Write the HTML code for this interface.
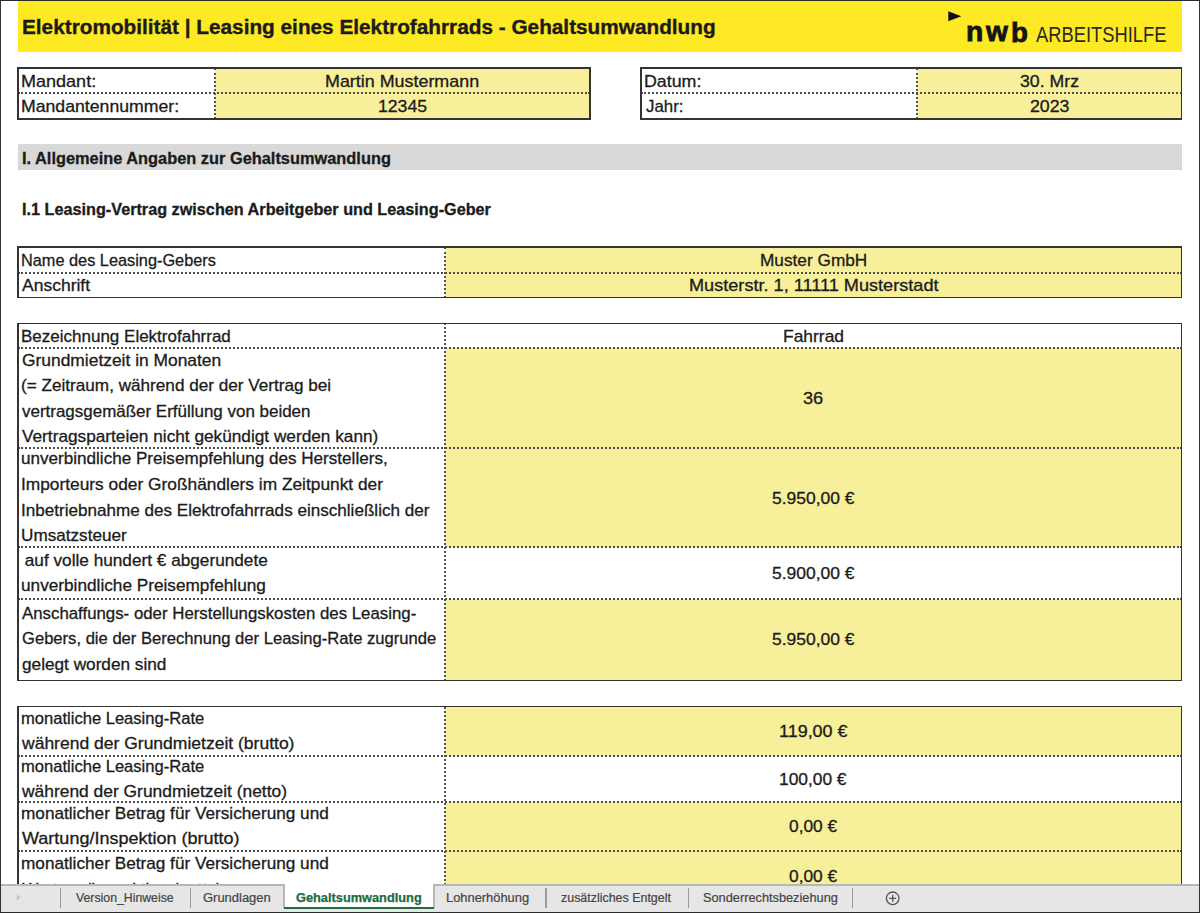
<!DOCTYPE html>
<html><head><meta charset="utf-8"><style>
html,body{margin:0;padding:0;}
body{width:1200px;height:913px;position:relative;overflow:hidden;background:#fff;font-family:"Liberation Sans",sans-serif;}
body>div,body>svg{position:absolute;}
</style></head><body>
<div style="left:0px;top:0px;width:1200px;height:913px;background:#ffffff;"></div>
<div style="left:18px;top:1px;width:1164px;height:51px;background:#fde924;"></div>
<div style="left:21.65px;top:17.37px;font-size:20px;line-height:20px;white-space:pre;color:#1b1b1b;font-weight:bold;transform:scaleX(1.0385);transform-origin:0 0;-webkit-text-stroke:0.35px #1b1b1b;">Elektromobilität | Leasing eines Elektrofahrrads - Gehaltsumwandlung</div>
<svg style="left:947px;top:10px" width="16" height="13"><polygon points="1.3,1.3 1.3,11.3 14.3,6.3" fill="#111"/></svg>
<div style="left:966.46px;top:19.24px;font-size:27px;line-height:27px;white-space:pre;color:#141414;font-weight:bold;transform:scaleX(1.0462);transform-origin:0 0;-webkit-text-stroke:0.8px #141414;">n</div>
<div style="left:986.04px;top:19.24px;font-size:27px;line-height:27px;white-space:pre;color:#141414;font-weight:bold;transform:scaleX(1.0427);transform-origin:0 0;-webkit-text-stroke:0.8px #141414;">w</div>
<div style="left:1010.90px;top:18.82px;font-size:27.5px;line-height:27.5px;white-space:pre;color:#141414;font-weight:bold;transform:scaleX(1.0081);transform-origin:0 0;-webkit-text-stroke:0.8px #141414;">b</div>
<div style="left:1036.00px;top:24.15px;font-size:21.2px;line-height:21.2px;white-space:pre;color:#2b2a1c;transform:scaleX(0.8653);transform-origin:0 0;">ARBEITSHILFE</div>
<div style="left:215px;top:68px;width:375px;height:51px;background:#f8ef9a;"></div>
<div style="left:18px;top:92.4px;width:572px;height:0;border-top:2.2px dotted #4d4d4d;"></div>
<div style="left:213.95px;top:68px;width:0;height:51px;border-left:2.1px dotted #555;"></div>
<div style="left:18px;top:67.35px;width:572px;height:1.5px;background:#333;"></div>
<div style="left:18px;top:118.25px;width:572px;height:1.5px;background:#333;"></div>
<div style="left:17.25px;top:67.35px;width:1.5px;height:52.400000000000006px;background:#333;"></div>
<div style="left:589.25px;top:67.35px;width:1.5px;height:52.400000000000006px;background:#333;"></div>
<div style="left:21.26px;top:73.01px;font-size:17px;line-height:17px;white-space:pre;color:#1b1b1b;transform:scaleX(1.0601);transform-origin:0 0;-webkit-text-stroke:0.3px #1b1b1b;">Mandant:</div>
<div style="left:21.29px;top:98.21px;font-size:17px;line-height:17px;white-space:pre;color:#1b1b1b;transform:scaleX(1.0390);transform-origin:0 0;-webkit-text-stroke:0.3px #1b1b1b;">Mandantennummer:</div>
<div style="left:325.32px;top:73.01px;font-size:17px;line-height:17px;white-space:pre;color:#1b1b1b;transform:scaleX(1.0522);transform-origin:0 0;-webkit-text-stroke:0.3px #1b1b1b;">Martin Mustermann</div>
<div style="left:377.68px;top:98.21px;font-size:17px;line-height:17px;white-space:pre;color:#1b1b1b;transform:scaleX(1.0374);transform-origin:0 0;-webkit-text-stroke:0.3px #1b1b1b;">12345</div>
<div style="left:917px;top:68px;width:265px;height:51px;background:#f8ef9a;"></div>
<div style="left:641px;top:92.4px;width:541px;height:0;border-top:2.2px dotted #4d4d4d;"></div>
<div style="left:916.35px;top:68px;width:0;height:51px;border-left:2.1px dotted #555;"></div>
<div style="left:641px;top:67.35px;width:540.5999999999999px;height:1.5px;background:#333;"></div>
<div style="left:641px;top:118.25px;width:540.5999999999999px;height:1.5px;background:#333;"></div>
<div style="left:640.25px;top:67.35px;width:1.5px;height:52.400000000000006px;background:#333;"></div>
<div style="left:1180.85px;top:67.35px;width:1.5px;height:52.400000000000006px;background:#333;"></div>
<div style="left:644.38px;top:73.01px;font-size:17px;line-height:17px;white-space:pre;color:#1b1b1b;transform:scaleX(1.0473);transform-origin:0 0;-webkit-text-stroke:0.3px #1b1b1b;">Datum:</div>
<div style="left:645.55px;top:98.21px;font-size:17px;line-height:17px;white-space:pre;color:#1b1b1b;transform:scaleX(0.9901);transform-origin:0 0;-webkit-text-stroke:0.3px #1b1b1b;">Jahr:</div>
<div style="left:1020.04px;top:73.01px;font-size:17px;line-height:17px;white-space:pre;color:#1b1b1b;transform:scaleX(1.0423);transform-origin:0 0;-webkit-text-stroke:0.3px #1b1b1b;">30. Mrz</div>
<div style="left:1029.66px;top:98.21px;font-size:17px;line-height:17px;white-space:pre;color:#1b1b1b;transform:scaleX(1.0442);transform-origin:0 0;-webkit-text-stroke:0.3px #1b1b1b;">2023</div>
<div style="left:17.5px;top:144.3px;width:1164.5px;height:26.19999999999999px;background:#d9d9d9;"></div>
<div style="left:21.73px;top:149.90px;font-size:16.3px;line-height:16.3px;white-space:pre;color:#1b1b1b;font-weight:bold;transform:scaleX(1.0052);transform-origin:0 0;-webkit-text-stroke:0.3px #1b1b1b;">I. Allgemeine Angaben zur Gehaltsumwandlung</div>
<div style="left:21.74px;top:201.20px;font-size:16.3px;line-height:16.3px;white-space:pre;color:#1b1b1b;font-weight:bold;transform:scaleX(0.9961);transform-origin:0 0;-webkit-text-stroke:0.3px #1b1b1b;">I.1 Leasing-Vertrag zwischen Arbeitgeber und Leasing-Geber</div>
<div style="left:445px;top:247px;width:737px;height:50.5px;background:#f8ef9a;"></div>
<div style="left:18px;top:271.5px;width:1164px;height:0;border-top:2.2px dotted #4d4d4d;"></div>
<div style="left:443.95px;top:247px;width:0;height:50.5px;border-left:2.1px dotted #555;"></div>
<div style="left:18px;top:246.25px;width:1163.7px;height:1.5px;background:#333;"></div>
<div style="left:18px;top:296.95px;width:1163.7px;height:1.5px;background:#333;"></div>
<div style="left:17.25px;top:246.25px;width:1.5px;height:52.19999999999999px;background:#333;"></div>
<div style="left:1180.95px;top:246.25px;width:1.5px;height:52.19999999999999px;background:#333;"></div>
<div style="left:21.20px;top:251.81px;font-size:17px;line-height:17px;white-space:pre;color:#1b1b1b;transform:scaleX(0.9593);transform-origin:0 0;-webkit-text-stroke:0.3px #1b1b1b;">Name des Leasing-Gebers</div>
<div style="left:21.80px;top:277.01px;font-size:17px;line-height:17px;white-space:pre;color:#1b1b1b;transform:scaleX(1.0294);transform-origin:0 0;-webkit-text-stroke:0.3px #1b1b1b;">Anschrift</div>
<div style="left:759.87px;top:251.81px;font-size:17px;line-height:17px;white-space:pre;color:#1b1b1b;transform:scaleX(1.0144);transform-origin:0 0;-webkit-text-stroke:0.3px #1b1b1b;">Muster GmbH</div>
<div style="left:688.55px;top:277.01px;font-size:17px;line-height:17px;white-space:pre;color:#1b1b1b;transform:scaleX(1.0664);transform-origin:0 0;-webkit-text-stroke:0.3px #1b1b1b;">Musterstr. 1, 11111 Musterstadt</div>
<div style="left:445px;top:348.4px;width:737px;height:99.80000000000001px;background:#f8ef9a;"></div>
<div style="left:445px;top:448.2px;width:737px;height:99.00000000000006px;background:#f8ef9a;"></div>
<div style="left:445px;top:599.2px;width:737px;height:81.5px;background:#f8ef9a;"></div>
<div style="left:18px;top:347.29999999999995px;width:1164px;height:0;border-top:2.2px dotted #4d4d4d;"></div>
<div style="left:18px;top:447.09999999999997px;width:1164px;height:0;border-top:2.2px dotted #4d4d4d;"></div>
<div style="left:18px;top:546.1px;width:1164px;height:0;border-top:2.2px dotted #4d4d4d;"></div>
<div style="left:18px;top:598.1px;width:1164px;height:0;border-top:2.2px dotted #4d4d4d;"></div>
<div style="left:443.95px;top:323.4px;width:0;height:357.30000000000007px;border-left:2.1px dotted #555;"></div>
<div style="left:18px;top:322.65px;width:1163.7px;height:1.5px;background:#333;"></div>
<div style="left:18px;top:679.95px;width:1163.7px;height:1.5px;background:#333;"></div>
<div style="left:17.25px;top:322.65px;width:1.5px;height:358.80000000000007px;background:#333;"></div>
<div style="left:1180.95px;top:322.65px;width:1.5px;height:358.80000000000007px;background:#333;"></div>
<div style="left:21.04px;top:327.81px;font-size:17px;line-height:17px;white-space:pre;color:#1b1b1b;-webkit-text-stroke:0.3px #1b1b1b;">Bezeichnung Elektrofahrrad</div>
<div style="left:782.86px;top:327.81px;font-size:17px;line-height:17px;white-space:pre;color:#1b1b1b;transform:scaleX(1.0257);transform-origin:0 0;-webkit-text-stroke:0.3px #1b1b1b;">Fahrrad</div>
<div style="left:21.53px;top:351.81px;font-size:17px;line-height:17px;white-space:pre;color:#1b1b1b;transform:scaleX(1.0234);transform-origin:0 0;-webkit-text-stroke:0.3px #1b1b1b;">Grundmietzeit in Monaten</div>
<div style="left:21.37px;top:377.21px;font-size:17px;line-height:17px;white-space:pre;color:#1b1b1b;transform:scaleX(1.0085);transform-origin:0 0;-webkit-text-stroke:0.3px #1b1b1b;">(= Zeitraum, während der der Vertrag bei</div>
<div style="left:22.32px;top:402.61px;font-size:17px;line-height:17px;white-space:pre;color:#1b1b1b;transform:scaleX(0.9976);transform-origin:0 0;-webkit-text-stroke:0.3px #1b1b1b;">vertragsgemäßer Erfüllung von beiden</div>
<div style="left:22.31px;top:428.01px;font-size:17px;line-height:17px;white-space:pre;color:#1b1b1b;transform:scaleX(1.0135);transform-origin:0 0;-webkit-text-stroke:0.3px #1b1b1b;">Vertragsparteien nicht gekündigt werden kann)</div>
<div style="left:803.42px;top:389.91px;font-size:17px;line-height:17px;white-space:pre;color:#1b1b1b;transform:scaleX(1.0680);transform-origin:0 0;-webkit-text-stroke:0.3px #1b1b1b;">36</div>
<div style="left:21.29px;top:450.41px;font-size:17px;line-height:17px;white-space:pre;color:#1b1b1b;transform:scaleX(1.0053);transform-origin:0 0;-webkit-text-stroke:0.3px #1b1b1b;">unverbindliche Preisempfehlung des Herstellers,</div>
<div style="left:20.84px;top:476.21px;font-size:17px;line-height:17px;white-space:pre;color:#1b1b1b;transform:scaleX(1.0189);transform-origin:0 0;-webkit-text-stroke:0.3px #1b1b1b;">Importeurs oder Großhändlers im Zeitpunkt der</div>
<div style="left:20.86px;top:501.51px;font-size:17px;line-height:17px;white-space:pre;color:#1b1b1b;transform:scaleX(1.0052);transform-origin:0 0;-webkit-text-stroke:0.3px #1b1b1b;">Inbetriebnahme des Elektrofahrrads einschließlich der</div>
<div style="left:21.11px;top:527.11px;font-size:17px;line-height:17px;white-space:pre;color:#1b1b1b;transform:scaleX(1.0080);transform-origin:0 0;-webkit-text-stroke:0.3px #1b1b1b;">Umsatzsteuer</div>
<div style="left:772.00px;top:489.61px;font-size:17px;line-height:17px;white-space:pre;color:#1b1b1b;transform:scaleX(1.0278);transform-origin:0 0;-webkit-text-stroke:0.3px #1b1b1b;">5.950,00 €</div>
<div style="left:20.49px;top:551.61px;font-size:17px;line-height:17px;white-space:pre;color:#1b1b1b;transform:scaleX(1.0122);transform-origin:0 0;-webkit-text-stroke:0.3px #1b1b1b;"> auf volle hundert € abgerundete</div>
<div style="left:21.28px;top:577.01px;font-size:17px;line-height:17px;white-space:pre;color:#1b1b1b;transform:scaleX(1.0121);transform-origin:0 0;-webkit-text-stroke:0.3px #1b1b1b;">unverbindliche Preisempfehlung</div>
<div style="left:772.00px;top:565.11px;font-size:17px;line-height:17px;white-space:pre;color:#1b1b1b;transform:scaleX(1.0278);transform-origin:0 0;-webkit-text-stroke:0.3px #1b1b1b;">5.900,00 €</div>
<div style="left:22.40px;top:604.61px;font-size:17px;line-height:17px;white-space:pre;color:#1b1b1b;transform:scaleX(0.9894);transform-origin:0 0;-webkit-text-stroke:0.3px #1b1b1b;">Anschaffungs- oder Herstellungskosten des Leasing-</div>
<div style="left:21.57px;top:629.91px;font-size:17px;line-height:17px;white-space:pre;color:#1b1b1b;transform:scaleX(0.9761);transform-origin:0 0;-webkit-text-stroke:0.3px #1b1b1b;">Gebers, die der Berechnung der Leasing-Rate zugrunde</div>
<div style="left:21.71px;top:655.61px;font-size:17px;line-height:17px;white-space:pre;color:#1b1b1b;transform:scaleX(1.0118);transform-origin:0 0;-webkit-text-stroke:0.3px #1b1b1b;">gelegt worden sind</div>
<div style="left:772.00px;top:631.41px;font-size:17px;line-height:17px;white-space:pre;color:#1b1b1b;transform:scaleX(1.0278);transform-origin:0 0;-webkit-text-stroke:0.3px #1b1b1b;">5.950,00 €</div>
<div style="left:445px;top:706.7px;width:737px;height:49.19999999999993px;background:#f8ef9a;"></div>
<div style="left:445px;top:802.4px;width:737px;height:48.5px;background:#f8ef9a;"></div>
<div style="left:445px;top:850.9px;width:737px;height:54.10000000000002px;background:#f8ef9a;"></div>
<div style="left:18px;top:754.8px;width:1164px;height:0;border-top:2.2px dotted #4d4d4d;"></div>
<div style="left:18px;top:801.3px;width:1164px;height:0;border-top:2.2px dotted #4d4d4d;"></div>
<div style="left:18px;top:849.8px;width:1164px;height:0;border-top:2.2px dotted #4d4d4d;"></div>
<div style="left:443.95px;top:706.7px;width:0;height:198.29999999999995px;border-left:2.1px dotted #555;"></div>
<div style="left:18px;top:705.95px;width:1163.7px;height:1.5px;background:#333;"></div>
<div style="left:17.25px;top:705.85px;width:1.5px;height:199.14999999999998px;background:#333;"></div>
<div style="left:1180.95px;top:705.85px;width:1.5px;height:199.14999999999998px;background:#333;"></div>
<div style="left:21.32px;top:709.91px;font-size:17px;line-height:17px;white-space:pre;color:#1b1b1b;transform:scaleX(0.9742);transform-origin:0 0;-webkit-text-stroke:0.3px #1b1b1b;">monatliche Leasing-Rate</div>
<div style="left:22.40px;top:735.41px;font-size:17px;line-height:17px;white-space:pre;color:#1b1b1b;transform:scaleX(1.0298);transform-origin:0 0;-webkit-text-stroke:0.3px #1b1b1b;">während der Grundmietzeit (brutto)</div>
<div style="left:778.70px;top:722.91px;font-size:17px;line-height:17px;white-space:pre;color:#1b1b1b;transform:scaleX(1.0565);transform-origin:0 0;-webkit-text-stroke:0.3px #1b1b1b;">119,00 €</div>
<div style="left:21.32px;top:757.81px;font-size:17px;line-height:17px;white-space:pre;color:#1b1b1b;transform:scaleX(0.9742);transform-origin:0 0;-webkit-text-stroke:0.3px #1b1b1b;">monatliche Leasing-Rate</div>
<div style="left:22.40px;top:783.31px;font-size:17px;line-height:17px;white-space:pre;color:#1b1b1b;transform:scaleX(1.0234);transform-origin:0 0;-webkit-text-stroke:0.3px #1b1b1b;">während der Grundmietzeit (netto)</div>
<div style="left:779.25px;top:771.11px;font-size:17px;line-height:17px;white-space:pre;color:#1b1b1b;transform:scaleX(1.0201);transform-origin:0 0;-webkit-text-stroke:0.3px #1b1b1b;">100,00 €</div>
<div style="left:21.28px;top:804.61px;font-size:17px;line-height:17px;white-space:pre;color:#1b1b1b;transform:scaleX(1.0116);transform-origin:0 0;-webkit-text-stroke:0.3px #1b1b1b;">monatlicher Betrag für Versicherung und</div>
<div style="left:22.31px;top:830.11px;font-size:17px;line-height:17px;white-space:pre;color:#1b1b1b;transform:scaleX(1.0597);transform-origin:0 0;-webkit-text-stroke:0.3px #1b1b1b;">Wartung/Inspektion (brutto)</div>
<div style="left:789.21px;top:817.61px;font-size:17px;line-height:17px;white-space:pre;color:#1b1b1b;transform:scaleX(1.0189);transform-origin:0 0;-webkit-text-stroke:0.3px #1b1b1b;">0,00 €</div>
<div style="left:21.28px;top:855.01px;font-size:17px;line-height:17px;white-space:pre;color:#1b1b1b;transform:scaleX(1.0116);transform-origin:0 0;-webkit-text-stroke:0.3px #1b1b1b;">monatlicher Betrag für Versicherung und</div>
<div style="left:22.31px;top:880.51px;font-size:17px;line-height:17px;white-space:pre;color:#1b1b1b;-webkit-text-stroke:0.3px #1b1b1b;">Wartung/Inspektion (netto)</div>
<div style="left:789.21px;top:867.61px;font-size:17px;line-height:17px;white-space:pre;color:#1b1b1b;transform:scaleX(1.0189);transform-origin:0 0;-webkit-text-stroke:0.3px #1b1b1b;">0,00 €</div>
<div style="left:1px;top:884px;width:1198px;height:28px;background:#e6e6e6;"></div>
<div style="left:1px;top:883.9px;width:1198px;height:1.7000000000000455px;background:#b7b7b7;"></div>
<div style="left:284px;top:883.9px;width:150px;height:24.100000000000023px;background:#ffffff;"></div>
<div style="left:283.4px;top:883.9px;width:1.2000000000000455px;height:24.100000000000023px;background:#b7b7b7;"></div>
<div style="left:433.4px;top:883.9px;width:1.2000000000000455px;height:24.100000000000023px;background:#b7b7b7;"></div>
<div style="left:284px;top:907px;width:150px;height:2px;background:#1f6a3f;"></div>
<div style="left:59.95px;top:888px;width:1.0999999999999943px;height:20px;background:#9a9a9a;"></div>
<div style="left:189.95px;top:888px;width:1.1000000000000227px;height:20px;background:#9a9a9a;"></div>
<div style="left:545.45px;top:888px;width:1.099999999999909px;height:20px;background:#9a9a9a;"></div>
<div style="left:687.75px;top:888px;width:1.099999999999909px;height:20px;background:#9a9a9a;"></div>
<div style="left:852.1500000000001px;top:888px;width:1.099999999999909px;height:20px;background:#9a9a9a;"></div>
<svg style="left:14px;top:892px" width="10" height="12"><polygon points="2.7,2.3 2.7,8.5 6.7,5.4" fill="#c4c4c4"/></svg>
<div style="left:75.94px;top:891.82px;font-size:12.5px;line-height:12.5px;white-space:pre;color:#444;transform:scaleX(0.9823);transform-origin:0 0;-webkit-text-stroke:0.2px #444;">Version_Hinweise</div>
<div style="left:203.10px;top:891.82px;font-size:12.5px;line-height:12.5px;white-space:pre;color:#444;transform:scaleX(1.0372);transform-origin:0 0;-webkit-text-stroke:0.2px #444;">Grundlagen</div>
<div style="left:296.19px;top:891.65px;font-size:12.7px;line-height:12.7px;white-space:pre;color:#1f6a3f;font-weight:bold;transform:scaleX(1.0075);transform-origin:0 0;-webkit-text-stroke:0.25px #1f6a3f;">Gehaltsumwandlung</div>
<div style="left:446.47px;top:891.82px;font-size:12.5px;line-height:12.5px;white-space:pre;color:#444;transform:scaleX(1.0309);transform-origin:0 0;-webkit-text-stroke:0.2px #444;">Lohnerhöhung</div>
<div style="left:561.20px;top:891.82px;font-size:12.5px;line-height:12.5px;white-space:pre;color:#444;transform:scaleX(0.9948);transform-origin:0 0;-webkit-text-stroke:0.2px #444;">zusätzliches Entgelt</div>
<div style="left:702.73px;top:891.82px;font-size:12.5px;line-height:12.5px;white-space:pre;color:#444;transform:scaleX(1.0212);transform-origin:0 0;-webkit-text-stroke:0.2px #444;">Sonderrechtsbeziehung</div>
<svg style="left:884px;top:890px" width="18" height="18"><circle cx="8.7" cy="8.3" r="6.3" fill="none" stroke="#555" stroke-width="1.3"/><path d="M8.7 4.8V11.8M5.2 8.3H12.2" stroke="#555" stroke-width="1.3"/></svg>
<div style="left:0px;top:0px;width:1200px;height:1.2px;background:#2b2b2b;"></div>
<div style="left:0px;top:0px;width:1.3px;height:913px;background:#333;"></div>
<div style="left:1198.7px;top:0px;width:1.2999999999999545px;height:913px;background:#333;"></div>
<div style="left:0px;top:911.6px;width:1200px;height:1.3999999999999773px;background:#2b2b2b;"></div>
</body></html>
